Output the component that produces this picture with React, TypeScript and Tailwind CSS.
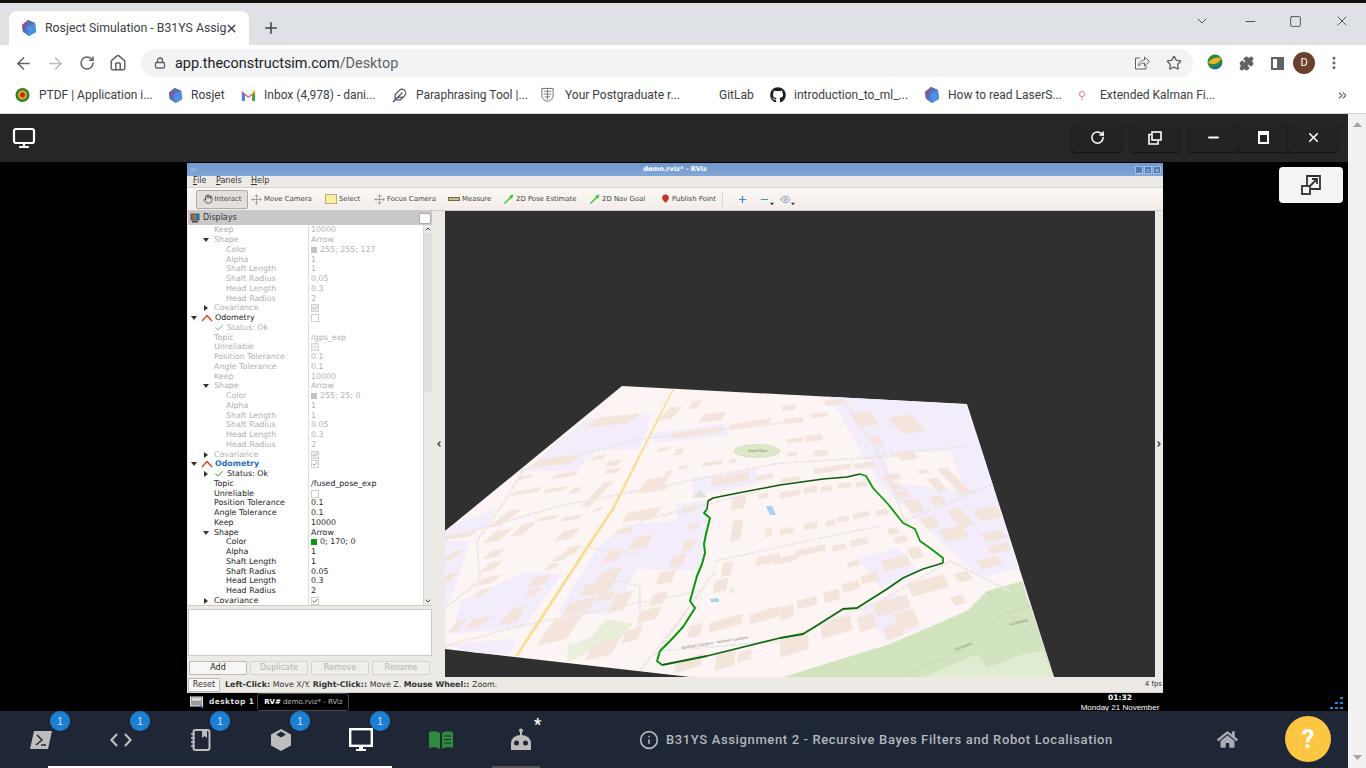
import React from 'react';
import { ArrowLeft, ArrowRight, RotateCw, Home, Lock, Star, Puzzle, MoreVertical, Plus, X, ChevronDown, Minus, Square, Feather, Monitor, ChevronsRight, Info, Check, Eye, MapPin, Hand, Move, ChevronLeft, ChevronRight, ChevronUp } from 'lucide-react';
import { FaGithub, FaHome } from 'react-icons/fa';

function RosjectIcon({ size = 15 }: { size?: number }) {
  return (
    <svg width={size} height={size} viewBox="0 0 16 16">
      <polygon points="7,0 14,3 15,12 8,16 2,12 1,5" fill="#4a78c8" />
      <polygon points="7,0 1,5 2,12 6,7" fill="#7a5a9e" />
      <polygon points="7,0 14,3 6,7" fill="#5f6fae" />
      <polygon points="6,7 14,3 15,12 8,16" fill="#4f8fe0" />
    </svg>
  );
}

function PtdfIcon() {
  return (
    <svg width="15" height="16" viewBox="0 0 16 16">
      <circle cx="8" cy="8" r="7.500" fill="#2f7d32" />
      <circle cx="8" cy="8" r="5" fill="#e2a11c" />
      <circle cx="8" cy="8" r="2.600" fill="#b3261e" />
    </svg>
  );
}

function GmailIcon() {
  return (
    <svg width="15" height="12" viewBox="0 0 16 12">
      <path d="M1 12V2l7 5.500L15 2v10h-3V6L8 9 4 6v6z" fill="#ea4335" />
      <path d="M1 12h3V6L1 3z" fill="#4285f4" />
      <path d="M12 12h3V3l-3 3z" fill="#34a853" />
      <path d="M12 6l3-3V1l-3 1.500z" fill="#fbbc04" />
    </svg>
  );
}

function ShieldIcon() {
  return (
    <svg width="15" height="16" viewBox="0 0 16 16">
      <path d="M2 1h12v8c0 3-3 5-6 6-3-1-6-3-6-6z" fill="#fff" stroke="#6b6b6b" strokeWidth="1" />
      <path d="M4 4h8M4 7h8M8 2v11M5 10h6" stroke="#777" strokeWidth="1" />
    </svg>
  );
}

const bookmarks: { w: string; icon: React.ReactNode; label: string; gap: string }[] = [
  { w: 'w-[153px]', icon: <PtdfIcon />, label: 'PTDF | Application i...', gap: 'w-[24px]' },
  { w: 'w-[73px]', icon: <RosjectIcon />, label: 'Rosjet', gap: 'w-[23px]' },
  { w: 'w-[151px]', icon: <GmailIcon />, label: 'Inbox (4,978) - dani...', gap: 'w-[23px]' },
  { w: 'w-[148px]', icon: <Feather size={15} className="text-gray-600" />, label: 'Paraphrasing Tool |...', gap: 'w-[24px]' },
  { w: 'w-[164px]', icon: <ShieldIcon />, label: 'Your Postgraduate r...', gap: 'w-[25px]' },
  { w: 'w-[66px]', icon: null, label: 'GitLab', gap: 'w-[15px]' },
  { w: 'w-[154px]', icon: <FaGithub size={16} className="text-[#1b1f23]" />, label: 'introduction_to_ml_...', gap: 'w-[24px]' },
  { w: 'w-[154px]', icon: <RosjectIcon size={16} />, label: 'How to read LaserS...', gap: 'w-[24px]' },
  { w: 'w-[250px]', icon: <span className="text-[#e08a9a] text-[11px] leading-none">⚲</span>, label: 'Extended Kalman Fi...', gap: 'w-[22px]' },
];

function BrowserChrome() {
  return (
    <div className="shrink-0 font-['Roboto',sans-serif]">
      <div className="h-[3px] bg-[#111]" />
      {/* tab strip */}
      <div className="h-[42px] bg-[#dee1e6] flex items-end pl-[9px]">
        <div className="w-[240px] h-[34px] bg-white rounded-t-[8px] flex items-center pl-[12px] pr-[11px]">
          <RosjectIcon size={16} />
          <span className="ml-[8px] w-[175px] whitespace-nowrap text-[12.300px] text-[#3c4043]">Rosject Simulation - B31YS Assig</span>
          <X size={13} strokeWidth={2.500} className="ml-auto text-[#3c4043]" />
        </div>
        <Plus size={18} strokeWidth={2} className="ml-[13px] mb-[8px] text-[#3c4043]" />
        <div className="ml-auto flex items-center h-[42px] pb-[6px]">
          <ChevronDown size={16} strokeWidth={1.100} className="mr-[33px] text-[#222]" />
          <Minus size={15} strokeWidth={1.200} className="mr-[31px] text-[#222]" />
          <Square size={13} strokeWidth={1.300} className="mr-[32px] text-[#222]" />
          <X size={16} strokeWidth={1.100} className="mr-[16px] text-[#222]" />
        </div>
      </div>
      {/* address bar */}
      <div className="h-[36px] bg-white flex items-center pl-[14px]">
        <ArrowLeft size={19} strokeWidth={2} className="text-[#5f6368]" />
        <ArrowRight size={19} strokeWidth={2} className="ml-[13px] text-[#b9bbbe]" />
        <RotateCw size={16} strokeWidth={2.200} className="ml-[14px] text-[#5f6368]" />
        <Home size={18} strokeWidth={2} className="ml-[14px] text-[#5f6368]" />
        <div className="ml-[14px] w-[1052px] h-[28px] rounded-full bg-[#f1f3f4] flex items-center pl-[13px] pr-[11px]">
          <Lock size={12} strokeWidth={2.600} className="text-[#5f6368]" />
          <span className="ml-[9px] mt-[1px] text-[14.400px] text-[#202124]">app.theconstructsim.com<span className="text-[#5f6368]">/Desktop</span></span>
          <svg width="16" height="16" viewBox="0 0 16 16" className="ml-auto" fill="none" stroke="#5f6368" strokeWidth="1">
            <path d="M6 3H1.500v11h10.500v-3" />
            <path d="M4.500 11c0-4 3-6 6-6V2l5 4.500-5 4.500V8c-2.500 0-4.500 1-6 3z" />
          </svg>
          <Star size={16} strokeWidth={2} className="ml-[16px] text-[#5f6368]" />
        </div>
        <svg width="18" height="18" viewBox="0 0 18 18" className="ml-[13px]">
          <circle cx="9" cy="8" r="7.500" fill="#2d8a3e" />
          <path d="M2 9c3-5 8-6 13-5-1 4-6 8-13 5z" fill="#f0b429" />
          <path d="M5 14c3 2 8 0 11-5l-6 3z" fill="#2a62c8" />
        </svg>
        <Puzzle size={15} strokeWidth={2} fill="#5f6368" className="ml-[15px] text-[#5f6368]" />
        <div className="ml-[17px] w-[13px] h-[13px] border-2 border-[#5f6368] flex justify-end">
          <div className="w-[5px] bg-[#5f6368]" />
        </div>
        <div className="ml-[9px] w-[22px] h-[22px] rounded-full bg-[#6d3f2e] text-white text-[11px] flex items-center justify-center">D</div>
        <MoreVertical size={16} strokeWidth={2.400} className="ml-[11px] text-[#5f6368]" />
      </div>
      {/* bookmarks */}
      <div className="h-[33px] bg-white border-b border-[#d0d2d4] flex items-center pb-[4px] pl-[15px] relative">
        {bookmarks.map(b => (
          <div key={b.label} className={`${b.w} shrink-0 flex items-center text-[12px] text-[#3c4043] whitespace-nowrap`}>
            <span className={`${b.gap} shrink-0 flex items-center`}>{b.icon}</span>
            {b.label}
          </div>
        ))}
        <ChevronsRight size={13} strokeWidth={2} className="absolute right-[17px] text-[#5f6368]" />
      </div>
    </div>
  );
}

function HeaderBtn({ children, cls }: { children: React.ReactNode; cls: string }) {
  return <div className={`${cls} h-[29px] w-[50px] rounded-[4px] bg-[#232323] shadow-[0_1px_2px_rgba(0,0,0,0.6)] flex items-center justify-center text-white`}>{children}</div>;
}

type Row = { n: string; v?: string; lvl: number; dim?: boolean; arrow?: 'd' | 'r'; box?: 'on' | 'off'; sw?: string; kind?: 'odom' | 'odomblue' | 'status' | 'statusok' };

const shapeRows = (c: string, sw: string, dim: boolean): Row[] => [
  { n: 'Shape', v: 'Arrow', lvl: 1, arrow: 'd', dim },
  { n: 'Color', v: c, sw, lvl: 2, dim },
  { n: 'Alpha', v: '1', lvl: 2, dim },
  { n: 'Shaft Length', v: '1', lvl: 2, dim },
  { n: 'Shaft Radius', v: '0.05', lvl: 2, dim },
  { n: 'Head Length', v: '0.3', lvl: 2, dim },
  { n: 'Head Radius', v: '2', lvl: 2, dim },
  { n: 'Covariance', lvl: 1, arrow: 'r', box: 'on', dim },
];

const commonRows = (topic: string, dim: boolean): Row[] => [
  { n: 'Topic', v: topic, lvl: 1, dim },
  { n: 'Unreliable', lvl: 1, box: 'off', dim },
  { n: 'Position Tolerance', v: '0.1', lvl: 1, dim },
  { n: 'Angle Tolerance', v: '0.1', lvl: 1, dim },
  { n: 'Keep', v: '10000', lvl: 1, dim },
];

const rows: Row[] = [
  { n: 'Keep', v: '10000', lvl: 1, dim: true },
  ...shapeRows('255; 255; 127', 'bg-[#c4c0c4]', true),
  { n: 'Odometry', lvl: 0, kind: 'odom', arrow: 'd', box: 'off', dim: true },
  { n: 'Status: Ok', lvl: 1, kind: 'status', dim: true },
  ...commonRows('/gps_exp', true),
  ...shapeRows('255; 25; 0', 'bg-[#c4c0c4]', true),
  { n: 'Odometry', lvl: 0, kind: 'odomblue', arrow: 'd', box: 'on' },
  { n: 'Status: Ok', lvl: 1, kind: 'statusok', arrow: 'r' },
  ...commonRows('/fused_pose_exp', false),
  ...shapeRows('0; 170; 0', 'bg-[#0a9a0a]', false),
];

function Tri({ dir, cls }: { dir: 'd' | 'r'; cls: string }) {
  return (
    <svg width="6" height="6" viewBox="0 0 6 6" className={cls}>
      <polygon points={dir === 'd' ? '0,1 6,1 3,5' : '1,0 5,3 1,6'} fill="#333" />
    </svg>
  );
}

function OdomIcon() {
  return (
    <svg width="12" height="8" viewBox="0 0 12 8" className="ml-[2px] mr-[2px] shrink-0">
      <path d="M1 7L6 1.500l5 5.500" fill="none" stroke="#e03020" strokeWidth="1.200" />
    </svg>
  );
}

function TreeRow({ r }: { r: Row }) {
  const tc = r.dim ? 'text-[#b0b0b0]' : 'text-[#1c1c1c]';
  let name: React.ReactNode;
  if (r.kind === 'odom' || r.kind === 'odomblue') {
    name = (
      <div className="flex items-center pl-[3px]">
        <Tri dir="d" cls="mr-[2px]" />
        <OdomIcon />
        <span className={r.kind === 'odom' ? 'text-[#1c1c1c]' : 'font-bold text-[#2a6fc0]'}>{r.n}</span>
      </div>
    );
  } else if (r.kind) {
    name = (
      <div className="flex items-center pl-[15px]">
        <span className="w-[11px] shrink-0">{r.arrow && <Tri dir="r" cls="" />}</span>
        <Check size={10} strokeWidth={2.400} className={`shrink-0 ${r.kind === 'status' ? 'text-[#999]' : 'text-[#2c8a2c]'}`} />
        <span className={`ml-[3px] ${tc}`}>{r.n}</span>
      </div>
    );
  } else {
    name = (
      <div className={`flex items-center ${r.lvl === 2 ? 'pl-[38px]' : 'pl-[15px]'}`}>
        {r.lvl === 1 && <span className="w-[11px] shrink-0">{r.arrow && <Tri dir={r.arrow} cls="" />}</span>}
        <span className={tc}>{r.n}</span>
      </div>
    );
  }
  return (
    <div className="h-[9.760px] flex items-center text-[7.900px] leading-none">
      <div className="w-[121px] shrink-0 border-r border-[#dedcdc] h-full flex items-center">{name}</div>
      <div className={`pl-[2px] flex items-center ${tc}`}>
        {r.sw && <span className={`w-[6px] h-[6px] mr-[3px] ${r.sw}`} />}
        {r.v}
        {r.box && (
          <span className={`w-[8px] h-[8px] border flex items-center justify-center ${r.dim && r.kind !== 'odom' ? 'border-[#d5d3d0] bg-[#efedea]' : 'border-[#d0cecb] bg-white'}`}>
            {r.box === 'on' && <Check size={8} strokeWidth={3} className={r.kind === 'odomblue' ? 'text-[#2a6fc0]' : r.dim ? 'text-[#999]' : 'text-[#222]'} />}
          </span>
        )}
      </div>
    </div>
  );
}

function ToolItem({ icon, label, cls }: { icon: React.ReactNode; label: string; cls: string }) {
  return (
    <div className={`${cls} shrink-0 flex items-center whitespace-nowrap`}>
      {icon}
      <span className="ml-[2px] text-[#444]">{label}</span>
    </div>
  );
}

function GreenArrow() {
  return (
    <svg width="10" height="10" viewBox="0 0 10 10">
      <path d="M0.500 9.500L8.500 1.500" stroke="#35c935" strokeWidth="1.400" />
      <polygon points="9.500,0.500 5,2 8,5" fill="#35c935" />
    </svg>
  );
}

function RvizToolbar() {
  return (
    <div className="h-[24px] shrink-0 flex items-center pl-[9px] bg-gradient-to-b from-[#fdf8f5] to-[#f3ecea] border-t border-[#d5d3cf] border-b border-b-[#cfcdca] text-[6.900px] relative">
      <div className="w-[52px] h-[19px] rounded-[2px] border border-[#aeaba6] bg-[#e3e0dc] flex items-center justify-center text-[#444]">
        <Hand size={10} strokeWidth={1.400} className="text-[#111]" />
        <span className="ml-[2px]">Interact</span>
      </div>
      <ToolItem cls="ml-[3px] w-[74px]" icon={<Move size={11} strokeWidth={1.200} className="text-[#666]" />} label="Move Camera" />
      <ToolItem cls="w-[49px]" icon={<span className="w-[12px] h-[10px] bg-[#fbeea0] border border-[#b5ad80]" />} label="Select" />
      <ToolItem cls="w-[74px]" icon={<Move size={11} strokeWidth={1.200} className="text-[#666]" />} label="Focus Camera" />
      <ToolItem cls="w-[56px]" icon={<span className="w-[12px] h-[4px] bg-[#c8bd7a] border border-[#6e6a50]" />} label="Measure" />
      <ToolItem cls="w-[86px]" icon={<GreenArrow />} label="2D Pose Estimate" />
      <ToolItem cls="w-[71px]" icon={<GreenArrow />} label="2D Nav Goal" />
      <ToolItem cls="w-[61px]" icon={<MapPin size={9} strokeWidth={2} fill="#c8322a" className="text-[#c8322a]" />} label="Publish Point" />
      <span className="w-px h-[15px] bg-[#d8d5d2]" />
      <Plus size={11} strokeWidth={2.600} className="ml-[14px] text-[#4a86d0]" />
      <Minus size={11} strokeWidth={2.600} className="ml-[11px] text-[#4a86d0]" />
      <Tri dir="d" cls="mt-[9px] w-[4px] h-[4px]" />
      <span className="ml-[6px] flex items-center">
        <Eye size={11} strokeWidth={1.600} className="text-[#5a7fae]" />
      </span>
      <Tri dir="d" cls="mt-[9px] w-[4px] h-[4px]" />
    </div>
  );
}

/* map drawing: coordinates are screen pixels, read off the zoomed crops */
const bz8: number[][] = [[300,235,130,22],[245,285,40,10],[350,280,70,12],[230,330,80,12],[320,325,70,10],[400,322,30,14],[475,110,130,25],[510,240,40,15],[505,265,40,12],[465,225,35,12],[620,295,70,30],[610,320,80,15],[680,270,20,12],[660,200,30,10],[710,205,25,15],[720,255,25,10],[790,245,60,10],[870,235,20,10],[820,290,110,22],[950,285,50,12],[690,80,40,30],[760,60,30,20],[790,100,70,20],[700,155,150,15],[870,130,80,14],[930,120,60,12],[205,390,40,40],[170,450,50,30],[250,430,40,30],[300,410,60,10],[370,410,60,10],[155,510,40,20],[150,545,40,25],[135,590,50,20],[125,625,30,20],[45,510,30,25],[20,580,40,50],[15,465,100,15],[370,450,50,25],[385,500,40,20],[330,550,30,15],[350,525,40,15],[285,590,50,25],[270,625,40,20],[220,680,40,25],[195,705,60,25],[100,715,55,25],[55,720,30,30],[565,395,100,25],[535,445,50,15],[585,470,55,30],[730,380,40,15],[745,432,35,12],[735,480,35,25],[700,525,40,30],[510,510,40,30],[490,570,60,60],[480,640,50,20],[530,640,50,45],[440,610,40,30],[660,575,50,30],[640,640,45,30],[605,690,60,30],[390,665,80,35],[340,720,90,60],[560,750,50,30],[460,790,80,40],[750,735,40,30],[810,725,100,25],[930,700,90,25],[830,820,60,40],[895,815,40,25],[710,840,80,30],[850,545,30,35],[825,600,40,30],[870,625,15,10],[950,530,50,20],[1000,520,20,25],[880,420,30,50],[880,350,40,30],[975,445,20,20],[955,340,30,12],[490,305,30,60],[470,380,20,10]];
const bz9: number[][] = [[5,75,40,12],[10,115,60,12],[90,100,50,10],[130,60,60,12],[210,100,60,30],[320,110,70,40],[270,170,25,20],[20,175,50,10],[75,165,50,15],[20,215,30,10],[100,210,40,15],[0,295,60,10],[100,265,110,12],[220,250,60,12],[305,285,50,14],[325,310,30,15],[345,335,35,15],[370,360,40,30],[345,215,50,20],[0,335,60,15],[70,320,40,15],[120,318,35,12],[170,310,40,12],[225,305,30,12],[470,265,30,60],[440,295,30,30],[410,270,30,8],[445,350,35,20],[420,415,40,25],[475,450,70,25],[500,390,40,40],[575,390,70,25],[590,540,60,20],[620,500,60,15],[0,445,40,15],[70,430,40,15],[135,420,30,15],[170,410,35,12],[215,400,50,12],[285,390,35,12],[0,530,50,15],[45,510,90,15],[155,495,40,15],[210,480,50,15],[320,445,30,15],[340,470,35,15],[380,505,35,25],[200,545,35,12],[300,540,80,25],[240,585,50,20],[130,635,45,25],[185,610,50,20],[50,660,60,20],[0,680,40,30],[120,730,90,35],[230,710,50,35],[0,780,85,40],[380,610,110,30],[510,650,35,20],[280,670,100,30],[340,700,60,40],[310,740,50,30],[520,580,40,20],[600,460,60,20]];

function building(ox: number, [zx, zy, zw, zh]: number[]) {
  const x = ox + zx / 3, y = 380 + zy / 3, w = zw / 3, h = (zh * 1.25) / 3;
  const slope = (265 - y) / (2026 - x);
  const lean = (x - 770) / (y - 300);
  return [[x, y], [x + w, y + w * slope], [x + w + h * lean, y + w * slope + h], [x + h * lean, y + h]].map(p => `${p[0].toFixed(1)},${p[1].toFixed(1)}`).join(' ');
}

const purples = [
  '523,470 587,417 652,413 640,448 597,450 575,470',
  '653,432 727,422 727,435 653,442',
  '692,477 757,468 757,483 693,495',
  '445,527 497,507 485,527 445,537',
  '460,600 523,572 563,572 523,627 453,633',
  '677,503 710,500 700,570 637,568 613,613 557,613 597,547 627,523 677,520',
  '445,540 470,540 453,593 445,607',
  '445,643 517,638 510,653 473,652',
  '827,395 966,403 993,480 1020,567 980,577 940,540 877,480 840,413',
  '857,557 897,547 920,570 880,587',
  '860,607 897,593 920,627 887,640',
];

const roads = [
  'M445,645 L520,625 L700,590', 'M445,538 L560,505 L780,462 L900,455', 'M445,607 L480,580 L477,540 L505,500 L523,470', 'M520,470 L640,438 L800,420',
  'M690,605 L640,670', 'M715,570 L655,655', 'M660,650 L780,640 L880,600 L950,560', 'M715,560 L830,535 L880,525', 'M640,520 L700,505 L760,490',
  'M845,400 L880,455 L905,520', 'M875,455 L965,445', 'M905,520 L1000,480', 'M950,560 L1010,590',
  'M575,545 L615,550 L640,553', 'M597,575 L640,585 L640,625 L610,640',
];

const pathGreen = '707,508 704,512 710,517 706,533 704,543 705,552 702,563 697,575 690,600 695,607 683,626 670,640 660,650 657,660 662,664';
const pathDark = '662,664 707,655 780,637 803,633 813,627 843,608 857,607 887,588 903,577 923,568 943,562';
const pathTop = '707,508 708,500 713,497 733,493 780,484 823,478 847,476 860,473';
const pathRight = '860,473 866,475 873,487 888,503 903,522 915,528 920,540 930,547 943,557 943,562';

function MapView() {
  return (
    <svg width="710" height="466" viewBox="445 210 710 466" className="block">
      <rect x="445" y="210" width="710" height="466" fill="#303030" />
      <polygon points="622,385 967,403 1054,676 690,676 445,648 445,530" fill="#fdf5f4" />
      <clipPath id="mapclip"><polygon points="622,385 967,403 1054,676 690,676 445,648 445,530" /></clipPath>
      <g clipPath="url(#mapclip)">
        {purples.map(p => <polygon key={p} points={p} fill="#f3ecfb" />)}
        <polygon points="883,453 950,450 965,490 895,482" fill="#fdf5f4" />
        <polygon points="780,677 890,643 967,610 987,590 1022,580 1054,676" fill="#d2e3bf" />
        <polygon points="977,653 987,667 1023,653 1043,650 1054,676 923,676" fill="#e0ecd2" />
        <polygon points="590,637 607,618 633,623 617,640 573,643" fill="#e8eed8" />
        <polygon points="568,643 613,638 567,662" fill="#eaf0dc" />
        <ellipse cx="757" cy="450" rx="23" ry="6.500" fill="#dbe8c8" stroke="#cfcfc8" strokeWidth="0.500" />
        <polygon points="692,497 700,488 707,496" fill="#e2e0dc" />
        {roads.map(d => (
          <g key={d}>
            <path d={d} fill="none" stroke="#dcd6d4" strokeWidth="1.400" strokeDasharray="6 1" />
            <path d={d} fill="none" stroke="#fdfbfa" strokeWidth="0.600" />
          </g>
        ))}
        <path d="M987,590 L1030,635 M1000,615 L960,650 L900,676 M1000,615 L1045,600" fill="none" stroke="#c9cbb0" strokeWidth="0.600" />
        {bz8.map(b => <polygon key={'a' + b.join()} points={building(440, b)} fill="#f3e5dc" />)}
        {bz9.map(b => <polygon key={'b' + b.join()} points={building(780, b)} fill="#f3e5dc" />)}
        <polygon points="672.500,388 674,388 614,508.500 588,548 518,655 515,655 586,546 612,507" fill="#f9dc8e" />
        <polygon points="766,505 772,505 776,514 770,514" fill="#a9d0ee" />
        <polygon points="710,598 718,597 719,601 711,601" fill="#a9d0ee" />
        <text x="682" y="648" fontSize="4" fill="#8a8280" fontFamily="'Liberation Sans', sans-serif" transform="rotate(-9 682 648)">Northam Gardens · Northam Gardens</text>
        <text x="955" y="650" fontSize="4" fill="#9a8f88" fontFamily="'Liberation Sans', sans-serif" transform="rotate(-20 955 650)">Northfields</text>
        <text x="1010" y="625" fontSize="4" fill="#9a8f88" fontFamily="'Liberation Sans', sans-serif" transform="rotate(-15 1010 625)">Northfields</text>
        <text x="748" y="451" fontSize="3.500" fill="#776" fontFamily="'Liberation Sans', sans-serif">Green Place</text>
        <polyline points={pathGreen} fill="none" stroke="#0a970a" strokeWidth="2" strokeLinejoin="round" />
        <polyline points={pathRight} fill="none" stroke="#0a9a0a" strokeWidth="1.800" strokeLinejoin="round" />
        <polyline points={pathDark} fill="none" stroke="#0b6a10" strokeWidth="1.800" strokeLinejoin="round" />
        <polyline points={pathTop} fill="none" stroke="#0c5a0e" strokeWidth="1.500" strokeLinejoin="round" />
      </g>
    </svg>
  );
}

function Rviz() {
  return (
    <div className="w-[976px] flex flex-col h-[530px] bg-[#edeae5] font-['DejaVu_Sans',sans-serif]">
      <div className="h-[13px] shrink-0 bg-gradient-to-b from-[#6f98cc] to-[#81a7d8] flex items-center relative">
        <span className="absolute left-[3px] text-[5px] text-[#dde] tracking-tight">▫▫</span>
        <span className="w-full text-center text-[6.600px] font-bold text-white">demo.rviz* - RViz</span>
        <div className="absolute right-[2px] flex gap-[1px]">
          {['_', '▫', '×'].map(t => <span key={t} className="w-[8px] h-[8px] bg-[#4f78b4] border border-[#a5c0e2] text-white text-[5px] leading-[6px] text-center">{t}</span>)}
        </div>
      </div>
      <div className="h-[10px] shrink-0 flex items-center pl-[6px] text-[8px] text-[#333] mb-[1px]">
        <span className="w-[23px]"><span className="underline">F</span>ile</span>
        <span className="w-[35px]"><span className="underline">P</span>anels</span>
        <span><span className="underline">H</span>elp</span>
      </div>
      <RvizToolbar />
      <div className="flex-1 min-h-0 flex">
        <div className="w-[245px] shrink-0 flex flex-col pl-px">
          <div className="h-[14px] shrink-0 bg-[#cac7ca] flex items-center pl-[2px] text-[8px] text-[#333]">
            <svg width="10" height="10" viewBox="0 0 10 10">
              <rect x="0.500" y="0.500" width="9" height="7" fill="#555" />
              <rect x="1.500" y="1.500" width="2.300" height="5" fill="#c44" />
              <rect x="3.800" y="1.500" width="2.300" height="5" fill="#4a4" />
              <rect x="6.100" y="1.500" width="2.400" height="5" fill="#46c" />
              <rect x="2" y="8" width="6" height="1.500" fill="#444" />
            </svg>
            <span className="ml-[3px]">Displays</span>
            <span className="ml-auto mr-px w-[12px] h-[11px] rounded-[2px] border border-[#aaa] bg-white" />
          </div>
          <div className="h-[381px] shrink-0 bg-white flex overflow-hidden border-b border-[#cfccc8]">
            <div className="flex-1 pt-[0.500px]">
              {rows.map((r, i) => <TreeRow key={i} r={r} />)}
            </div>
            <div className="w-[9px] shrink-0 bg-[#edeae5] border-l border-[#d8d5d1] flex flex-col items-center">
              <ChevronUp size={8} strokeWidth={3} className="text-[#444]" />
              <div className="w-full h-[159px] bg-[#e2dfda]" />
              <ChevronDown size={8} strokeWidth={3} className="mt-auto text-[#444]" />
            </div>
          </div>
          <div className="h-[47px] shrink-0 mt-[3px] bg-white border border-[#cfccc8]" />
          <div className="flex gap-[3px] mt-[5px] pl-px text-[8px]">
            {['Add', 'Duplicate', 'Remove', 'Rename'].map((b, i) => (
              <div key={b} className={`w-[58px] h-[14px] rounded-[1px] border flex items-center justify-center ${i === 0 ? 'border-[#bdbab6] bg-[#f8f6f4] text-[#222]' : 'border-[#d8d5d1] bg-[#f0eeea] text-[#b4b2ae]'}`}>{b}</div>
            ))}
          </div>
        </div>
        <div className="w-[13px] shrink-0 flex items-center justify-center">
          <ChevronLeft size={8} strokeWidth={4} className="text-[#333]" />
        </div>
        <MapView />
        <div className="w-[8px] shrink-0 flex items-center justify-center">
          <ChevronRight size={8} strokeWidth={4} className="text-[#333]" />
        </div>
      </div>
      <div className="h-[17px] shrink-0 flex items-center pl-px pr-px pt-[1px] text-[7.900px] text-[#333] border-b border-[#d5d3cf]">
        <span className="w-[32px] h-[14px] border border-[#bdbab6] bg-[#f8f6f4] rounded-[1px] flex items-center justify-center text-[8px]">Reset</span>
        <span className="ml-[5px]"><b>Left-Click:</b> Move X/Y. <b>Right-Click::</b> Move Z. <b>Mouse Wheel::</b> Zoom.</span>
        <span className="ml-auto text-[7px]">4 fps</span>
      </div>
    </div>
  );
}

function Taskbar() {
  return (
    <div className="h-[18px] shrink-0 flex items-center pl-[190px] font-['DejaVu_Sans',sans-serif] text-white relative">
      <svg width="14" height="13" viewBox="0 0 14 13">
        <rect x="0.500" y="1" width="12" height="9" fill="#9a9a9a" stroke="#e4e4e4" />
        <rect x="2" y="2.500" width="9" height="2" fill="#eee" />
        <path d="M10 9l3 3" stroke="#3b7fd0" strokeWidth="1.500" />
      </svg>
      <span className="ml-[5px] text-[7.500px] font-bold text-[#ddd] tracking-[0.4px]">desktop 1</span>
      <div className="ml-[3px] w-[92px] h-[18px] border border-[#4a4a4a] rounded-[3px] flex items-center justify-center text-[7px] text-[#bbb]">
        <b className="text-white mr-[2px]">RV#</b> demo.rviz* - RViz
      </div>
      <div className="absolute left-[1080px] w-[80px] top-[0px] text-center leading-[10px] text-white">
        <div className="text-[7.500px] font-bold">01:32</div>
        <div className="text-[8px] whitespace-nowrap font-['Liberation_Sans',sans-serif]">Monday 21 November</div>
      </div>
      <div className="absolute left-[1330px] bottom-[2px] grid grid-cols-3 gap-[2.500px]">
        {[0, 0, 1, 0, 1, 1, 1, 1, 1].map((on, i) => <span key={i} className={`w-[2.500px] h-[2.500px] ${on ? 'bg-[#1e88e5]' : ''}`} />)}
      </div>
    </div>
  );
}

function Badge() {
  return <span className="absolute left-[49px] top-0 w-[20px] h-[20px] rounded-full bg-[#1b7fd4] text-[#cfe4f7] text-[10px] flex items-center justify-center font-['Liberation_Sans',sans-serif]">1</span>;
}

function DockSlot({ children, badge }: { children: React.ReactNode; badge?: boolean }) {
  return (
    <div className="w-[80px] h-full relative flex items-center justify-center pt-[1px]">
      {badge && <Badge />}
      {children}
    </div>
  );
}

function Dock() {
  return (
    <div className="h-[57px] shrink-0 bg-[#1f2736] flex items-center pl-[1px] relative font-['Roboto',sans-serif]">
      <DockSlot badge>
        <svg width="22" height="20" viewBox="0 0 22 20">
          <polygon points="4,1 22,1 18,19 0,19" fill="#bdbdbd" />
          <path d="M7 5l5 5-6 5M11 15h5" fill="none" stroke="#1f2736" strokeWidth="1.500" />
        </svg>
      </DockSlot>
      <DockSlot badge>
        <svg width="22" height="14" viewBox="0 0 22 14"><path d="M7 1L1.500 7 7 13M15 1l5.500 6L15 13" fill="none" stroke="#bdbdbd" strokeWidth="2.200" /></svg>
      </DockSlot>
      <DockSlot badge>
        <svg width="20" height="22" viewBox="0 0 20 22">
          <rect x="2.500" y="1" width="16" height="20" rx="2" fill="none" stroke="#bdbdbd" strokeWidth="2" />
          <path d="M11 1h5v8l-2.500-2L11 9z" fill="#bdbdbd" />
          <path d="M0 5h4M0 9h4M0 13h4M0 17h4" stroke="#bdbdbd" strokeWidth="1.400" />
        </svg>
      </DockSlot>
      <DockSlot badge>
        <svg width="20" height="22" viewBox="0 0 20 22">
          <path d="M10 0l10 5.500v11L10 22 0 16.500v-11z" fill="#bdbdbd" />
          <path d="M10 2.500l5 3-5 3-5-3z" fill="#1f2736" />
        </svg>
      </DockSlot>
      <DockSlot badge>
        <svg width="24" height="24" viewBox="0 0 24 24">
          <rect x="1.200" y="1.200" width="21.600" height="16.600" fill="none" stroke="#fff" strokeWidth="2.400" />
          <path d="M10 18h4v3h-4zM7 21h10v2H7z" fill="#fff" />
        </svg>
      </DockSlot>
      <DockSlot>
        <svg width="24" height="18" viewBox="0 0 24 18">
          <path d="M0 1c4-1 8-1 11 1v16c-3-2-7-2-11-1zM13 2c3-2 7-2 11-1v16c-4-1-8-1-11 1z" fill="#2e8b3c" />
          <path d="M15 5h7M15 8.500h7M15 12h7" stroke="#1f2736" strokeWidth="1.200" />
        </svg>
      </DockSlot>
      <DockSlot>
        <svg width="24" height="24" viewBox="0 0 24 24">
          <circle cx="12" cy="2.500" r="2" fill="#bdbdbd" />
          <rect x="11" y="3" width="2" height="5" fill="#bdbdbd" />
          <path d="M2 22v-7a10 8 0 0 1 20 0v7z" fill="#bdbdbd" />
          <circle cx="7.500" cy="15" r="2.500" fill="#1f2736" />
          <circle cx="16.500" cy="15" r="2.500" fill="#1f2736" />
        </svg>
        <span className="absolute left-[53px] top-[6px] text-white text-[16px] leading-none font-bold">*</span>
      </DockSlot>
      <div className="ml-[78px] flex items-center text-[#b3b6bb]">
        <Info size={20} strokeWidth={2} />
        <span className="ml-[7px] text-[13px] font-medium tracking-[0.63px] whitespace-nowrap">B31YS Assignment 2 - Recursive Bayes Filters and Robot Localisation</span>
      </div>
      <FaHome size={21} className="absolute left-[1217px] text-[#a9acb1]" />
      <div className="absolute left-[1285px] top-[5px] w-[46px] h-[46px] rounded-full bg-[#fcc542] flex items-center justify-center text-white text-[26px] font-bold">?</div>
      <div className="absolute left-[48px] bottom-0 w-[344px] h-[2px] bg-white" />
      <div className="absolute left-[492px] bottom-0 w-[48px] h-[2px] bg-[#555]" />
    </div>
  );
}

export default function App() {
  return (
    <div className="w-[1366px] h-[768px] overflow-hidden flex flex-col bg-black">
      <BrowserChrome />
      <div className="flex-1 min-h-0 flex">
        <div className="w-[1348px] shrink-0 flex flex-col relative">
          {/* app header */}
          <div className="h-[48px] shrink-0 bg-[#262626] flex items-center pl-[12px]">
            <Monitor size={24} strokeWidth={2.200} className="text-white" />
            <div className="ml-auto flex pr-[10px] -mt-[1px]">
              <HeaderBtn cls="mr-[8px]"><RotateCw size={15} strokeWidth={2.400} /></HeaderBtn>
              <HeaderBtn cls="mr-[8px]">
                <svg width="14" height="14" viewBox="0 0 14 14" fill="none" stroke="#fff" strokeWidth="1.600">
                  <rect x="4" y="1" width="9" height="8" />
                  <path d="M4 3.500H1v9.500h9v-3" />
                </svg>
              </HeaderBtn>
              <HeaderBtn cls=""><Minus size={15} strokeWidth={3.500} /></HeaderBtn>
              <HeaderBtn cls="">
                <span className="w-[11px] h-[13px] border-2 border-t-[4px] border-white" />
              </HeaderBtn>
              <HeaderBtn cls=""><X size={15} strokeWidth={2.600} /></HeaderBtn>
            </div>
          </div>
          <div className="flex-1 min-h-0 flex flex-col pt-px">
            <div className="pl-[187px]"><Rviz /></div>
            <Taskbar />
          </div>
          <div className="absolute left-[1279px] top-[53px] w-[64px] h-[36px] rounded-[4px] bg-[#f5f5f5] flex items-center justify-center">
            <svg width="22" height="22" viewBox="0 0 22 22" fill="none" stroke="#333" strokeWidth="1.800">
              <path d="M7 12V2h13v13H11" />
              <rect x="2" y="12" width="8" height="8" />
              <path d="M10 12l7-7M12 5h5v5" />
            </svg>
          </div>
          <Dock />
        </div>
        {/* page scrollbar */}
        <div className="flex-1 bg-[#f1f1f1] flex flex-col items-center justify-between py-[8px]">
          <svg width="9" height="5" viewBox="0 0 9 5"><polygon points="4.500,0 9,5 0,5" fill="#a3a3a3" /></svg>
          <svg width="9" height="5" viewBox="0 0 9 5"><polygon points="0,0 9,0 4.500,5" fill="#a3a3a3" /></svg>
        </div>
      </div>
    </div>
  );
}
